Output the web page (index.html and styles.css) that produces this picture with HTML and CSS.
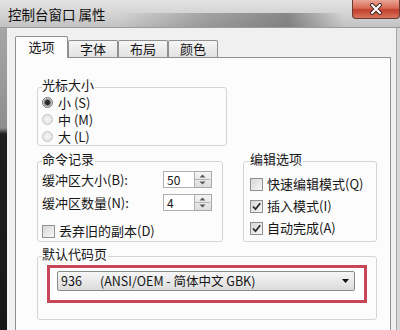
FILE: index.html
```html
<!DOCTYPE html>
<html lang="zh-CN">
<head>
<meta charset="utf-8">
<title>控制台窗口 属性</title>
<link rel="stylesheet" href="styles.css">
</head>
<body>
<div class="window">
  <div class="titlebar">
    <span class="title">控制台窗口 属性</span>
    <div class="close">
      <svg width="14" height="12" viewBox="0 0 14 12"><path d="M3 2 L11 10 M11 2 L3 10" stroke="#4a2a26" stroke-width="4" stroke-linecap="round"/><path d="M3 2 L11 10 M11 2 L3 10" stroke="#ffffff" stroke-width="2" stroke-linecap="round"/></svg>
    </div>
  </div>
  <div class="body">
    <div class="edge-left"></div>
    <div class="client">
      <div class="tabs">
        <div class="tab active">选项</div>
        <div class="tab">字体</div>
        <div class="tab">布局</div>
        <div class="tab">颜色</div>
      </div>
      <div class="panel">
        <div class="group g-cursor">
          <div class="group-title">光标大小</div>
          <div class="options">
            <div class="radio-row"><span class="radio checked"></span><span>小 (S)</span></div>
            <div class="radio-row"><span class="radio"></span><span>中 (M)</span></div>
            <div class="radio-row"><span class="radio"></span><span>大 (L)</span></div>
          </div>
        </div>
        <div class="row2">
          <div class="group g-history">
            <div class="group-title">命令记录</div>
            <div class="fields">
              <div class="field">
                <span class="field-label">缓冲区大小(B):</span>
                <span class="spin-input">50</span>
                <span class="spinner"><svg width="15" height="15" viewBox="0 0 15 15"><path d="M0 7.5 H15" stroke="#b4b4b4" stroke-width="1"/><path d="M4.5 5.5 L7.5 2.5 L10.5 5.5 Z M4.5 9.5 L7.5 12.5 L10.5 9.5 Z" fill="#5a5a5a"/></svg></span>
              </div>
              <div class="field">
                <span class="field-label">缓冲区数量(N):</span>
                <span class="spin-input">4</span>
                <span class="spinner"><svg width="15" height="15" viewBox="0 0 15 15"><path d="M0 7.5 H15" stroke="#b4b4b4" stroke-width="1"/><path d="M4.5 5.5 L7.5 2.5 L10.5 5.5 Z M4.5 9.5 L7.5 12.5 L10.5 9.5 Z" fill="#5a5a5a"/></svg></span>
              </div>
            </div>
            <div class="check-row discard"><span class="check"></span><span>丢弃旧的副本(D)</span></div>
          </div>
          <div class="group g-edit">
            <div class="group-title">编辑选项</div>
            <div class="edit-list">
              <div class="check-row"><span class="check"></span><span>快速编辑模式(Q)</span></div>
              <div class="check-row"><span class="check checked"><svg width="11" height="11" viewBox="0 0 11 11"><path d="M2 5.5 L4.5 8.2 L9.2 2.3" stroke="#2a2a2a" stroke-width="1.8" fill="none"/></svg></span><span>插入模式(I)</span></div>
              <div class="check-row"><span class="check checked"><svg width="11" height="11" viewBox="0 0 11 11"><path d="M2 5.5 L4.5 8.2 L9.2 2.3" stroke="#2a2a2a" stroke-width="1.8" fill="none"/></svg></span><span>自动完成(A)</span></div>
            </div>
          </div>
        </div>
        <div class="group g-codepage">
          <div class="group-title">默认代码页</div>
          <div class="highlight">
            <div class="select">
              <span class="cp-num">936</span>
              <span class="cp-name">(ANSI/OEM - 简体中文 GBK)</span>
              <svg class="arrow" width="7" height="4" viewBox="0 0 7 4"><path d="M0 0 H7 L3.5 4 Z" fill="#111"/></svg>
            </div>
          </div>
        </div>
      </div>
    </div>
    <div class="edge-right"></div>
  </div>
</div>
</body>
</html>
```
FILE: styles.css
```css
* { box-sizing: border-box; }
html, body { margin: 0; padding: 0; }
body {
  width: 400px;
  height: 330px;
  overflow: hidden;
  font-family: "Noto Sans CJK SC", "Noto Sans", sans-serif;
  font-size: 13px;
  line-height: 16px;
  color: #161616;
  background: #f0f0f0;
}
.window {
  width: 400px;
  height: 330px;
  display: flex;
  flex-direction: column;
}
.titlebar {
  height: 28px;
  flex: none;
  display: flex;
  align-items: flex-start;
  border-bottom: 1px solid #9c9c9c;
  background:
    linear-gradient(to right, rgba(70,70,70,0) 30%, rgba(70,70,70,0.35) 52%, rgba(60,60,60,0.5) 72%, rgba(70,70,70,0) 86%) left bottom / 100% 14px no-repeat,
    linear-gradient(to bottom, #e2e2e2 0%, #d4d4d4 50%, #c2c2c2 100%);
}
.title {
  padding: 5px 0 0 8px;
  font-size: 13.5px;
  line-height: 18px;
  color: #0e0e0e;
}
.close {
  margin-left: auto;
  width: 48px;
  height: 19px;
  border: 1px solid #6a3a34;
  border-top: none;
  border-radius: 0 0 4px 4px;
  background: linear-gradient(to bottom, #e9a596 0%, #d86a55 45%, #c2402c 55%, #d7765c 100%);
  display: flex;
  align-items: center;
  justify-content: center;
}
.body {
  flex: 1;
  display: flex;
  min-height: 0;
}
.edge-left {
  width: 7px;
  flex: none;
  background: linear-gradient(to bottom, #a6a6a6 0, #8e8e8e 100px, #1e1e1e 106px, #151515 100%);
}
.edge-right {
  width: 4px;
  flex: none;
  background: #d6d6d6;
  border-left: 1px solid #a6a6a6;
}
.client {
  flex: 1;
  padding: 8px 5px 0 8px;
  background: #f0f0f0;
  display: flex;
  flex-direction: column;
}
.tabs {
  display: flex;
  align-items: flex-end;
  height: 22px;
  margin-bottom: -1px;
  flex: none;
}
.tab {
  width: 50px;
  height: 17px;
  margin-bottom: 1px;
  border: 1px solid #8f8f8f;
  border-bottom: none;
  border-radius: 2px 2px 0 0;
  background: linear-gradient(to bottom, #f6f6f6, #e2e2e2);
  text-align: center;
  line-height: 16px;
  font-size: 13px;
}
.tab.active {
  width: 53px;
  height: 22px;
  margin-bottom: 0;
  background: #fcfcfc;
  line-height: 20px;
  position: relative;
  z-index: 1;
}
.panel {
  flex: 1;
  border: 1px solid #8f8f8f;
  border-bottom: none;
  background: #fcfcfc;
  padding: 29px 13px 0 21px;
}
.group {
  border: 1px solid #d4d4d4;
  border-radius: 3px;
  padding: 0 4px;
}
.group-title {
  width: fit-content;
  margin-top: -10px;
  padding-right: 1px;
  background: #fcfcfc;
  line-height: 14px;
}
.g-cursor { width: 190px; }
.options { margin-top: 2px; }
.radio-row {
  display: flex;
  align-items: center;
  height: 17px;
  line-height: 17px;
}
.radio {
  width: 11px;
  height: 11px;
  flex: none;
  margin-right: 5px;
  border-radius: 50%;
  border: 1px solid #c2c2c2;
  background: radial-gradient(circle, #f6f6f6 0, #e0e0e0 100%);
}
.radio.checked {
  border-color: #707070;
  background: radial-gradient(circle, #2a2a2a 0, #2a2a2a 2px, #7c7c7c 3px, #e6e6e6 4.5px);
}
.row2 {
  display: flex;
  gap: 20px;
  margin-top: 15px;
}
.g-history {
  width: 186px;
  padding: 0 10px 2px 4px;
}
.fields { margin-top: 5px; }
.field {
  display: flex;
  align-items: center;
  height: 17px;
  line-height: 17px;
}
.field + .field { margin-top: 6px; }
.field-label { flex: 1; }
.spin-input {
  width: 32px;
  height: 17px;
  border: 1px solid #b0b0b0;
  background: #fff;
  font-size: 12px;
  line-height: 15px;
  padding-left: 3px;
}
.spinner {
  width: 17px;
  height: 17px;
  border: 1px solid #a8a8a8;
  border-left: none;
  background: linear-gradient(to bottom, #f4f4f4, #dedede);
  display: flex;
}
.check-row {
  display: flex;
  align-items: center;
  height: 16px;
  line-height: 16px;
}
.discard { margin-top: 12px; }
.check {
  width: 13px;
  height: 13px;
  flex: none;
  margin-right: 4px;
  border: 1px solid #8f8f8f;
  background: linear-gradient(135deg, #d6d6d6, #f8f8f8);
  display: flex;
}
.g-edit {
  flex: 1;
  padding: 0 4px 2px 6px;
}
.edit-list { margin-top: 7px; }
.edit-list .check-row { height: 22px; line-height: 22px; }
.g-codepage {
  margin-top: 14px;
  padding: 0 4px 16px;
}
.highlight {
  margin: 4px 5px 0 5px;
  border: 3px solid #c8465a;
  padding: 3px 9px 9px 7px;
  background: #fff;
}
.select {
  height: 20px;
  border: 1px solid #8a8a8a;
  border-radius: 2px;
  background: linear-gradient(to bottom, #f6f6f6, #dcdcdc);
  display: flex;
  align-items: center;
  padding: 0 5px 0 3px;
  font-size: 12.5px;
  line-height: 18px;
}
.cp-num { width: 39px; flex: none; }
.cp-name { flex: 1; }
.arrow { flex: none; }
```
